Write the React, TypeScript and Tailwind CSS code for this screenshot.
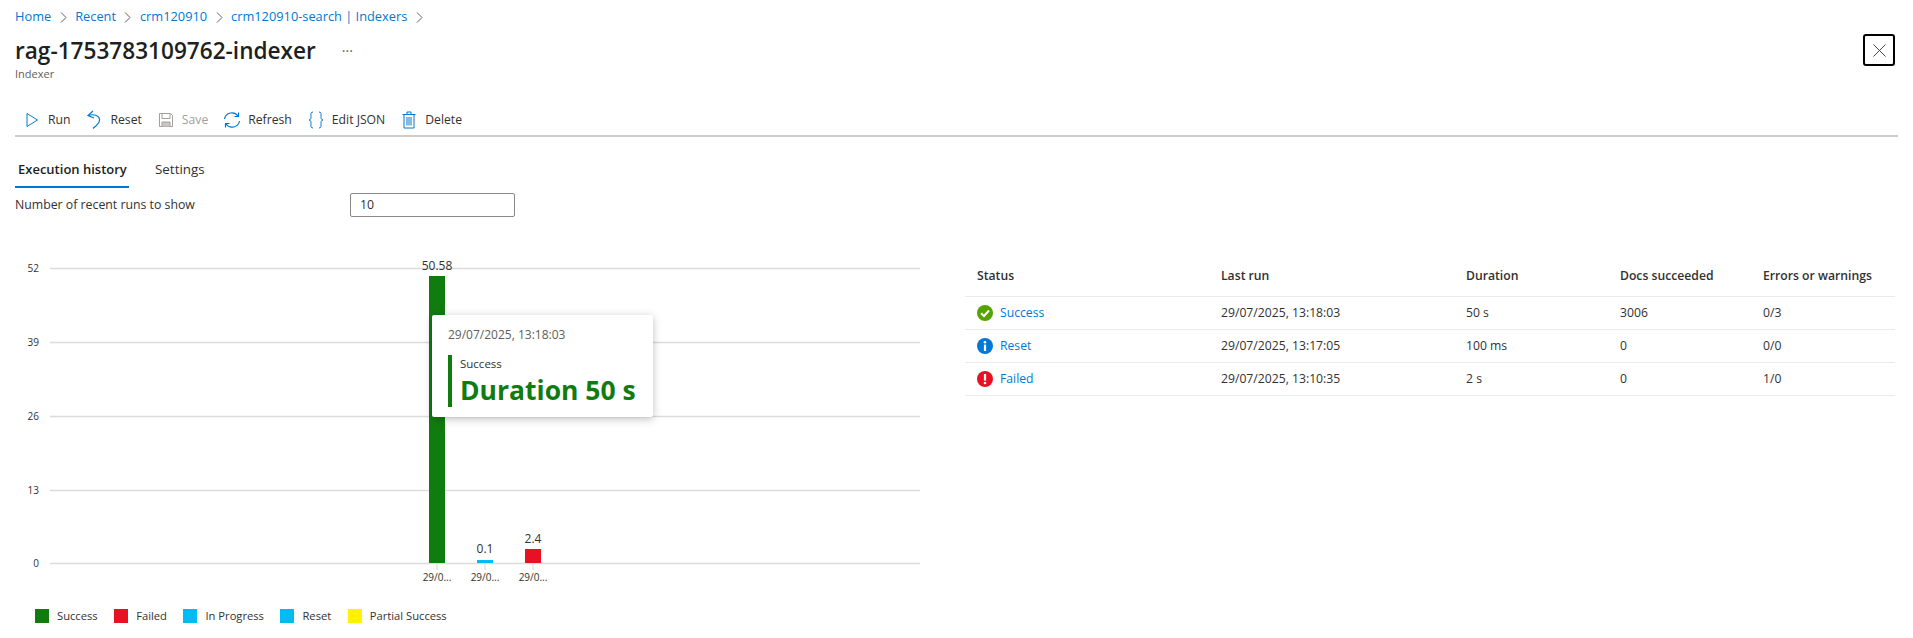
import React from 'react';

const FONT = "font-['Open_Sans','Noto_Sans',sans-serif]";

const crumbs = ['Home', 'Recent', 'crm120910', 'crm120910-search | Indexers'];

const RunIcon = () => (
  <svg width="16" height="20" viewBox="0 0 16 20" fill="none" stroke="#0078d4" strokeWidth="1">
    <path d="M3 3.5 L13.5 10 L3 16.5 Z" />
  </svg>
);

const ResetIcon = () => (
  <svg width="18" height="20" viewBox="0 0 18 20" fill="none" stroke="#0078d4" strokeWidth="1.2">
    <path d="M8 1 L3 5.5 L9 8" />
    <path d="M3.5 5.5 C9 3.5 15 6 14.5 10.5 C14 14 11 16 8 18.5" />
  </svg>
);

const SaveIcon = () => (
  <svg width="16" height="16" viewBox="0 0 16 16" fill="none" stroke="#a19f9d" strokeWidth="1">
    <path d="M1.5 1.5 H12.5 L14.5 3.5 V14.5 H1.5 Z" />
    <path d="M4 1.5 V6.5 H12 V1.5" />
    <path d="M4 14.5 V10 H12 V14.5" fill="#c8c6c4" />
  </svg>
);

const RefreshIcon = () => (
  <svg width="18" height="18" viewBox="0 0 18 18" fill="none" stroke="#0078d4" strokeWidth="1.2">
    <path d="M1.5 8 A7.5 7.5 0 0 1 15 5" />
    <path d="M15.5 1.5 V5.5 H11.5" />
    <path d="M16.5 10 A7.5 7.5 0 0 1 3 13" />
    <path d="M2.5 16.5 V12.5 H6.5" />
  </svg>
);

const BracesIcon = () => (
  <svg width="16" height="20" viewBox="0 0 16 20" fill="none" stroke="#0078d4" strokeWidth="1">
    <path d="M5 2 C2.5 2 3 4 3 6.5 C3 8.5 3 9.5 1 10 C3 10.5 3 11.5 3 13.5 C3 16 2.5 18 5 18" />
    <path d="M11 2 C13.5 2 13 4 13 6.5 C13 8.5 13 9.5 15 10 C13 10.5 13 11.5 13 13.5 C13 16 13.5 18 11 18" />
  </svg>
);

const TrashIcon = () => (
  <svg width="14" height="18" viewBox="0 0 14 18" fill="none" stroke="#0078d4" strokeWidth="1">
    <path d="M0.5 3.5 H13.5" />
    <path d="M5 3.5 V1 H9 V3.5" />
    <path d="M2 3.5 V17 H12 V3.5" />
    <path d="M5 6 V14.5 M7 6 V14.5 M9 6 V14.5" />
  </svg>
);

const Chevron = () => (
  <svg width="7" height="11" viewBox="0 0 7 11" fill="none" stroke="#605e5c" strokeWidth="1">
    <path d="M1 0.5 L6 5.5 L1 10.5" />
  </svg>
);

const SuccessDot = () => (
  <svg width="16" height="16" viewBox="0 0 16 16">
    <circle cx="8" cy="8" r="8" fill="#57a300" />
    <path d="M4 8.3 L7 11 L12 5.5" fill="none" stroke="#fff" strokeWidth="2" />
  </svg>
);

const InfoDot = () => (
  <svg width="16" height="16" viewBox="0 0 16 16">
    <circle cx="8" cy="8" r="8" fill="#0078d4" />
    <circle cx="8" cy="4.3" r="1.3" fill="#fff" />
    <rect x="6.9" y="6.6" width="2.2" height="6.4" fill="#fff" />
  </svg>
);

const FailedDot = () => (
  <svg width="16" height="16" viewBox="0 0 16 16">
    <circle cx="8" cy="8" r="8" fill="#e81123" />
    <rect x="6.9" y="3" width="2.2" height="6.6" fill="#fff" />
    <circle cx="8" cy="12" r="1.3" fill="#fff" />
  </svg>
);

const toolbar = [
  { label: 'Run', icon: <RunIcon />, disabled: false },
  { label: 'Reset', icon: <ResetIcon />, disabled: false },
  { label: 'Save', icon: <SaveIcon />, disabled: true },
  { label: 'Refresh', icon: <RefreshIcon />, disabled: false },
  { label: 'Edit JSON', icon: <BracesIcon />, disabled: false },
  { label: 'Delete', icon: <TrashIcon />, disabled: false },
];

const runs = [
  { status: 'Success', icon: <SuccessDot />, last: '29/07/2025, 13:18:03', duration: '50 s', docs: '3006', errors: '0/3' },
  { status: 'Reset', icon: <InfoDot />, last: '29/07/2025, 13:17:05', duration: '100 ms', docs: '0', errors: '0/0' },
  { status: 'Failed', icon: <FailedDot />, last: '29/07/2025, 13:10:35', duration: '2 s', docs: '0', errors: '1/0' },
];

const legend = [
  { label: 'Success', color: 'bg-[#107c10]' },
  { label: 'Failed', color: 'bg-[#e81123]' },
  { label: 'In Progress', color: 'bg-[#00bcf2]' },
  { label: 'Reset', color: 'bg-[#00bcf2]' },
  { label: 'Partial Success', color: 'bg-[#fff100]' },
];

const gridLines = [
  { y: 51, label: '52' },
  { y: 125, label: '39' },
  { y: 199, label: '26' },
  { y: 273, label: '13' },
  { y: 346, label: '0' },
];

// x is the centre of the column, in chart coordinates
const bars = [
  { x: 437, top: 59, color: '#107c10', value: '50.58', valueY: 53 },
  { x: 485, top: 343, color: '#00bcf2', value: '0.1', valueY: 336 },
  { x: 533, top: 332, color: '#e81123', value: '2.4', valueY: 326 },
];

const Chart = () => (
  <svg width="965" height="385" viewBox="0 0 965 385" className="block">
    {gridLines.map((g) => (
      <g key={g.label}>
        <line x1="50" x2="920" y1={g.y + 0.5} y2={g.y + 0.5} stroke="#dcdcdc" strokeWidth="1.5" />
        <text x="39" y={g.y + 4} textAnchor="end" fontSize="10" fill="#323130">
          {g.label}
        </text>
      </g>
    ))}
    {bars.map((b) => (
      <g key={b.x}>
        <line x1={b.x} x2={b.x} y1="347" y2="353" stroke="#edebe9" strokeWidth="2" />
        <rect x={b.x - 8} y={b.top} width="16" height={346 - b.top} fill={b.color} />
        <text x={b.x} y={b.valueY} textAnchor="middle" fontSize="12" fill="#323130">
          {b.value}
        </text>
        <text x={b.x} y="364" textAnchor="middle" fontSize="10" fill="#323130">
          29/0...
        </text>
      </g>
    ))}
  </svg>
);

export default function App() {
  return (
    <div className={`${FONT} h-[638px] w-[1913px] overflow-hidden bg-white pt-[8px] text-[#323130]`}>
      <nav className="flex h-[18px] items-center gap-[8.5px] pl-[15px] text-[12.8px] text-[#0078d4]">
        {crumbs.map((c) => (
          <React.Fragment key={c}>
            <span>{c}</span>
            <Chevron />
          </React.Fragment>
        ))}
      </nav>

      <div className="flex items-start justify-between pl-[15px] pr-[18px]">
        <div className="pt-[10px]">
          <div className="flex items-center">
            <h1 className="text-[22.6px] leading-[30px] font-semibold text-[#201f1e]">rag-1753783109762-indexer</h1>
            <span className="ml-[26px] text-[14px] leading-none text-[#605e5c]">···</span>
          </div>
          <p className="mt-[1px] text-[11px] leading-[14px] text-[#605e5c]">Indexer</p>
        </div>
        <button className="mt-[8px] flex h-[32px] w-[32px] items-center justify-center rounded-[3px] border-2 border-black">
          <svg width="13" height="13" viewBox="0 0 13 13" stroke="#323130" strokeWidth="0.9" fill="none">
            <path d="M0.5 0.5 L12.5 12.5 M12.5 0.5 L0.5 12.5" />
          </svg>
        </button>
      </div>

      <div className="mx-[15px] mt-[21px] flex h-[35px] items-center gap-[14px] border-b-2 border-[#cccccc] pl-[7px] pt-[3px] text-[12.2px]">
        {toolbar.map((t) => (
          <button key={t.label} className={`flex items-center gap-[6px] ${t.disabled ? 'text-[#a19f9d]' : 'text-[#323130]'}`}>
            <span className="flex w-[20px] justify-center">{t.icon}</span>
            {t.label}
          </button>
        ))}
      </div>

      <div className="mt-[23px] flex pl-[15px] leading-[18px]">
        <div className="w-[114px] border-b-2 border-[#0078d4] pb-[8px] pl-[3px] text-[13px] font-semibold text-[#201f1e]">Execution history</div>
        <div className="ml-[26px] text-[13.4px] text-[#323130]">Settings</div>
      </div>

      <div className="mt-[5px] flex h-[24px] items-center pl-[15px] text-[12.3px]">
        <span className="w-[335px]">Number of recent runs to show</span>
        <div className="flex h-[24px] w-[165px] items-center rounded-[2px] border border-[#8a8886] pl-[9px]">10</div>
      </div>

      <div className="flex">
        <div className="w-[965px] shrink-0">
          <div className="relative">
            <Chart />
            <div className="absolute left-[432px] top-[98px] h-[102px] w-[221px] rounded-[2px] bg-white pl-[16px] pt-[12px] shadow-[0_2px_8px_rgba(0,0,0,0.25)]">
              <div className="text-[12px] leading-[16px] text-[#605e5c]">29/07/2025, 13:18:03</div>
              <div className="mt-[12px] flex h-[52px] border-l-4 border-[#107c10] pl-[8px]">
                <div className="pt-[1px]">
                  <div className="text-[11.5px] leading-[16px]">Success</div>
                  <div className="mt-[3px] text-[26.5px] leading-[30px] font-bold whitespace-nowrap text-[#107c10]">Duration 50 s</div>
                </div>
              </div>
            </div>
          </div>
          <div className="mt-[7px] flex items-center gap-[16.5px] pl-[35px] text-[11.2px] leading-[14px]">
            {legend.map((l) => (
              <div key={l.label} className="flex items-center gap-[8px]">
                <span className={`h-[14px] w-[14px] ${l.color}`} />
                {l.label}
              </div>
            ))}
          </div>
        </div>

        <div className="mr-[18px] flex-1 pt-[48px] text-[12.2px]">
          <div className="grid h-[32px] grid-cols-[244px_245px_154px_143px_1fr] items-center border-b border-[#edebe9] pb-[9px] pl-[12px] font-semibold">
            <span>Status</span>
            <span>Last run</span>
            <span>Duration</span>
            <span>Docs succeeded</span>
            <span>Errors or warnings</span>
          </div>
          {runs.map((r) => (
            <div key={r.status} className="grid h-[33px] grid-cols-[244px_245px_154px_143px_1fr] items-center border-b border-[#edebe9] pl-[12px]">
              <span className="flex items-center gap-[7px] text-[#0078d4]">
                {r.icon}
                {r.status}
              </span>
              <span>{r.last}</span>
              <span>{r.duration}</span>
              <span>{r.docs}</span>
              <span>{r.errors}</span>
            </div>
          ))}
        </div>
      </div>
    </div>
  );
}
